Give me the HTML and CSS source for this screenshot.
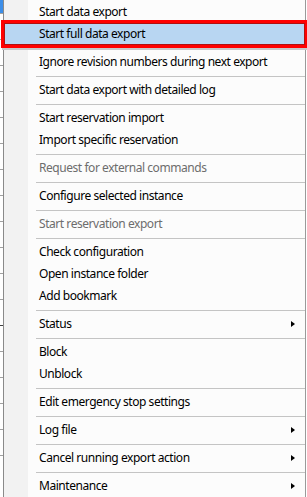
FILE: index.html
```html
<!DOCTYPE html>
<html>
<head>
<meta charset="utf-8">
<link rel="stylesheet" href="styles.css">
</head>
<body>
<div class="screen">
  <div class="behind">
    <div class="row sel"></div>
    <div class="row"></div>
    <div class="row"></div>
    <div class="row"></div>
    <div class="row"></div>
    <div class="row"></div>
    <div class="row"></div>
    <div class="row"></div>
    <div class="row"></div>
    <div class="row"></div>
    <div class="row"></div>
    <div class="row"></div>
    <div class="row dark"></div>
    <div class="row"></div>
    <div class="row"></div>
    <div class="row"></div>
    <div class="row"></div>
    <div class="row"></div>
  </div>
  <div class="menu">
    <div class="item">Start data export</div>
    <div class="item hl">Start full data export</div>
    <div class="sep hidden"></div>
    <div class="item">Ignore revision numbers during next export</div>
    <div class="sep"></div>
    <div class="item">Start data export with detailed log</div>
    <div class="sep"></div>
    <div class="item">Start reservation import</div>
    <div class="item">Import specific reservation</div>
    <div class="sep"></div>
    <div class="item off">Request for external commands</div>
    <div class="sep"></div>
    <div class="item">Configure selected instance</div>
    <div class="sep"></div>
    <div class="item off">Start reservation export</div>
    <div class="sep"></div>
    <div class="item">Check configuration</div>
    <div class="item">Open instance folder</div>
    <div class="item">Add bookmark</div>
    <div class="sep"></div>
    <div class="item sub">Status</div>
    <div class="sep"></div>
    <div class="item">Block</div>
    <div class="item">Unblock</div>
    <div class="sep"></div>
    <div class="item">Edit emergency stop settings</div>
    <div class="sep"></div>
    <div class="item sub">Log file</div>
    <div class="sep"></div>
    <div class="item sub">Cancel running export action</div>
    <div class="sep"></div>
    <div class="item sub">Maintenance</div>
  </div>
  <div class="edge"></div>
</div>
</body>
</html>
```
FILE: styles.css
```css
html, body {
  margin: 0;
  padding: 0;
  background: #ffffff;
}
.screen {
  display: flex;
  width: 307px;
  height: 497px;
  overflow: hidden;
  font-family: "Noto Sans", "Open Sans", sans-serif;
  font-size: 12px;
  letter-spacing: -0.45px;
  color: #000;
}
.behind {
  flex: none;
  width: 4px;
  background: #ffffff;
  border-right: 1px solid #8a8a8a;
  box-sizing: border-box;
}
.behind .row {
  height: 26px;
  border-bottom: 1px solid #a0a0a0;
  box-sizing: border-box;
}
.behind .row.sel {
  height: 14px;
  background: #3d8ee8;
}
.behind .row.dark {
  border-bottom: 1px solid #404040;
}
.menu {
  flex: 1;
  padding-top: 1px;
  background: linear-gradient(to right, #f2f2f2 0, #f2f2f2 24px, #fcfcfc 24px);
  border-right: 1px solid #9a9a9a;
}
.edge {
  width: 1px;
  flex: none;
  background: #ffffff;
}
.item {
  height: 22px;
  line-height: 22px;
  padding-left: 35px;
  position: relative;
  white-space: nowrap;
}
.item.off {
  color: #6d6d6d;
}
.item.sub::after {
  content: "";
  position: absolute;
  right: 10px;
  top: 8px;
  border-left: 4px solid #000;
  border-top: 3.5px solid transparent;
  border-bottom: 3.5px solid transparent;
}
.item.hl {
  background: #b8d6f2;
  box-shadow: inset 0 0 0 1px #b01010, 0 0 0 3px #ff0000, 1px 2px 0 3px #c8c8c8;
  z-index: 1;
}
.sep {
  height: 6px;
  margin-left: 32px;
  display: flex;
  align-items: center;
}
.sep::before {
  content: "";
  flex: 1;
  height: 1px;
  background: #c4c4c4;
}
.sep.hidden::before {
  background: transparent;
}
```
